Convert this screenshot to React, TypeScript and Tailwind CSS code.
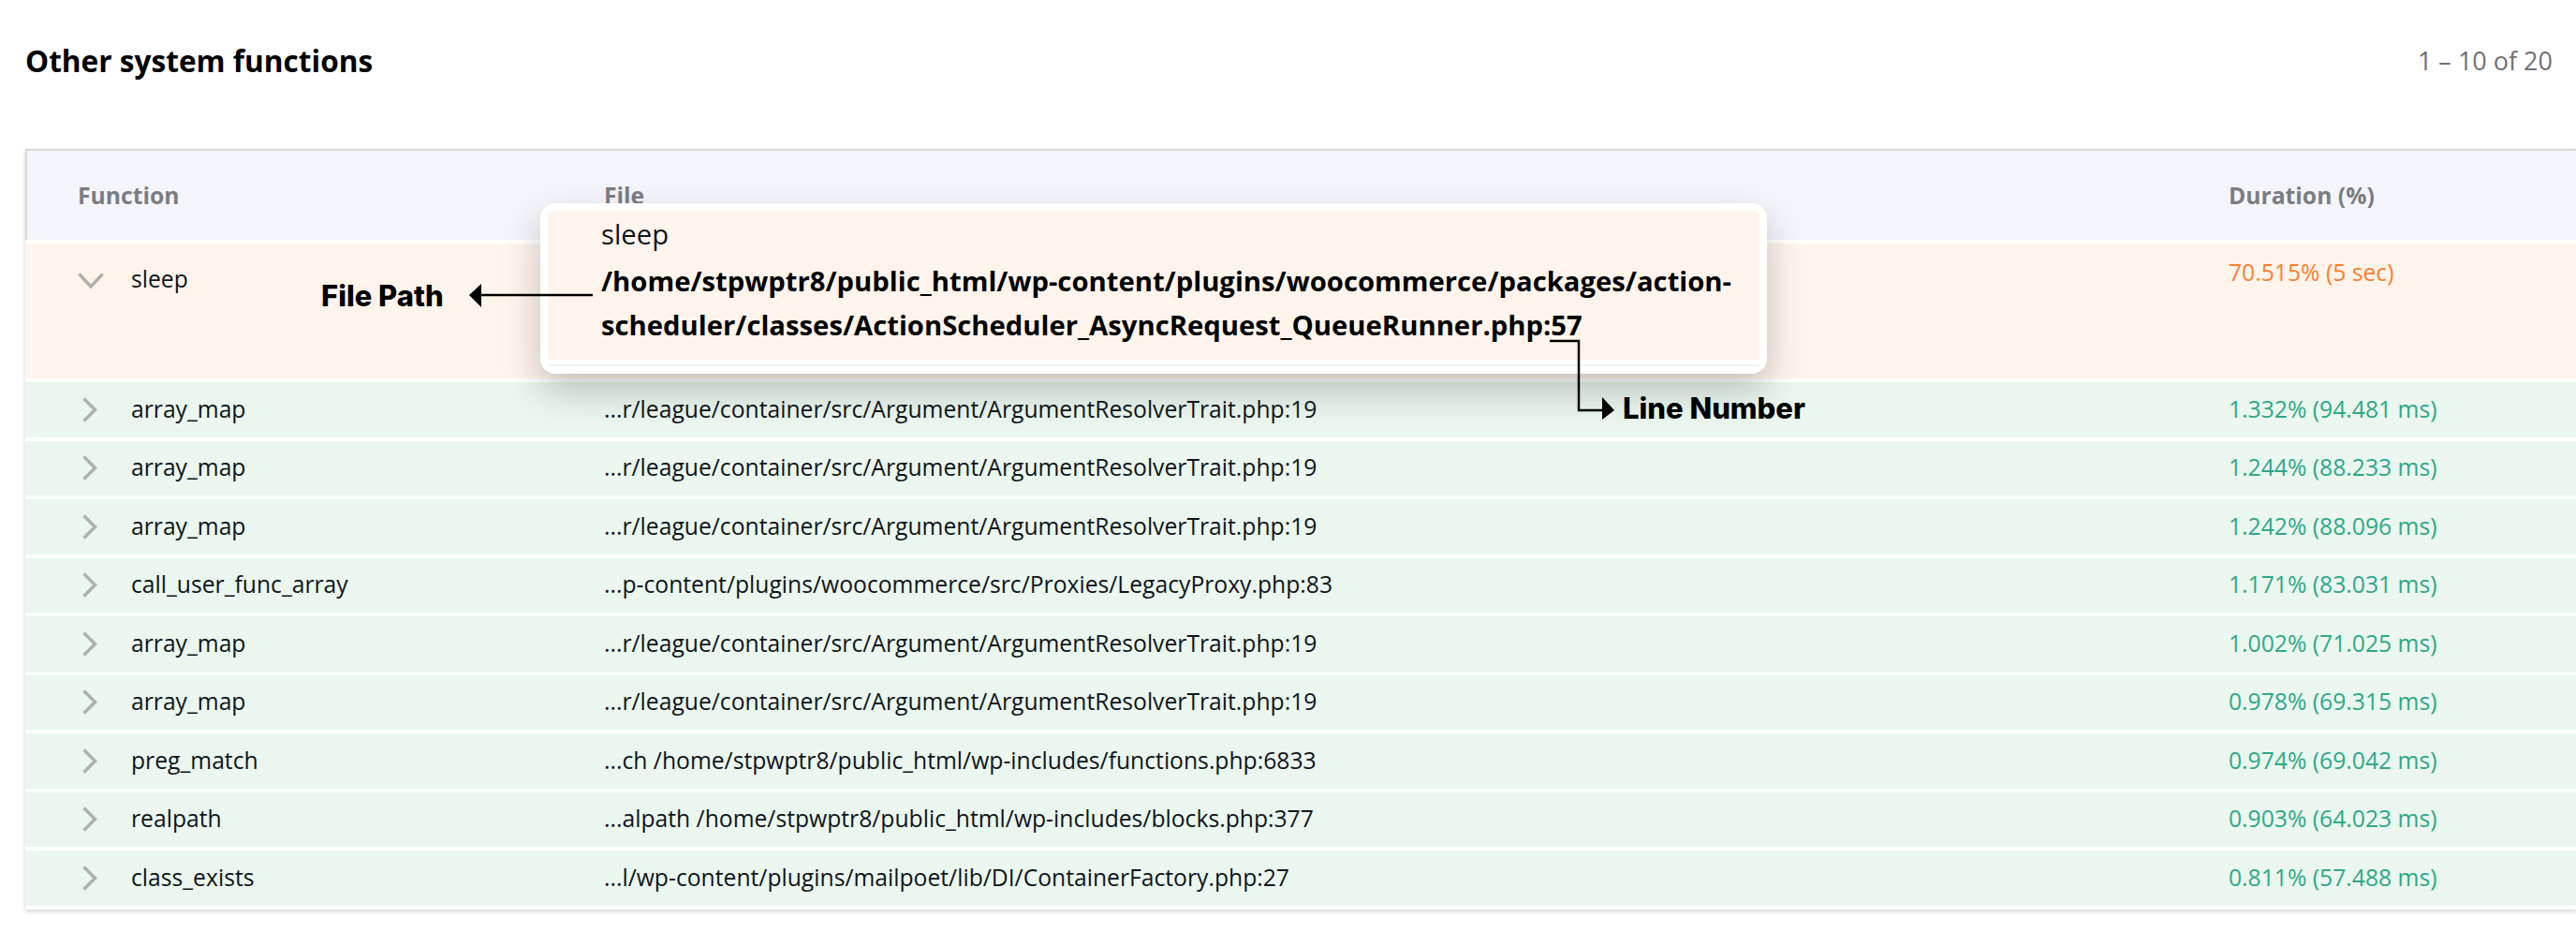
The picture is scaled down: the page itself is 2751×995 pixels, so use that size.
import React from "react";

const rows = [
  ["array_map", "...r/league/container/src/Argument/ArgumentResolverTrait.php:19", "1.332% (94.481 ms)"],
  ["array_map", "...r/league/container/src/Argument/ArgumentResolverTrait.php:19", "1.244% (88.233 ms)"],
  ["array_map", "...r/league/container/src/Argument/ArgumentResolverTrait.php:19", "1.242% (88.096 ms)"],
  ["call_user_func_array", "...p-content/plugins/woocommerce/src/Proxies/LegacyProxy.php:83", "1.171% (83.031 ms)"],
  ["array_map", "...r/league/container/src/Argument/ArgumentResolverTrait.php:19", "1.002% (71.025 ms)"],
  ["array_map", "...r/league/container/src/Argument/ArgumentResolverTrait.php:19", "0.978% (69.315 ms)"],
  ["preg_match", "...ch /home/stpwptr8/public_html/wp-includes/functions.php:6833", "0.974% (69.042 ms)"],
  ["realpath", "...alpath /home/stpwptr8/public_html/wp-includes/blocks.php:377", "0.903% (64.023 ms)"],
  ["class_exists", "...l/wp-content/plugins/mailpoet/lib/DI/ContainerFactory.php:27", "0.811% (57.488 ms)"],
];

function ChevronRight() {
  return (
    <svg width="17" height="27" viewBox="0 0 17 27" fill="none" className="shrink-0">
      <path d="M2.5 1.5 L14.5 13.5 L2.5 25.5" stroke="#b0b0b0" strokeWidth="3.5" />
    </svg>
  );
}

function ChevronDown() {
  return (
    <svg width="28" height="17" viewBox="0 0 28 17" fill="none" className="shrink-0">
      <path d="M1.5 1.5 L14 15 L26.5 1.5" stroke="#b0b0b0" strokeWidth="3.5" />
    </svg>
  );
}

export default function App() {
  return (
    <div className="relative h-[995px] w-[2751px] overflow-hidden bg-white pl-[27px] font-['Open_Sans',sans-serif] text-[24.7px] text-[#10141a]">
      <div className="flex h-[159px] items-start justify-between pr-[25px] pt-[44px]">
        <h2 className="text-[31.6px] leading-[42px] font-bold text-black">Other system functions</h2>
        <div className="text-[27px] leading-[42px] text-[#6f7275]">1 – 10 of 20</div>
      </div>

      <div className="shadow-[0_2px_5px_rgba(0,0,0,0.18)]">
        <div className="grid h-[97px] grid-cols-[616px_1735px_1fr] items-center border-t-2 border-l-2 border-[#d9d9d9] bg-[#f4f5fa] text-[24.7px] font-bold text-[#7a7d82]">
          <div className="pl-[54px]">Function</div>
          <div>File</div>
          <div>Duration (%)</div>
        </div>
        <div className="border-t-4 border-white">
          <div className="grid h-[144px] grid-cols-[618px_1735px_1fr] bg-[#fff4ec]">
            <div className="flex items-start pl-[56px] pt-[31px]">
              <ChevronDown />
              <span className="ml-[29px] -mt-[10px] leading-[34px]">sleep</span>
            </div>
            <div />
            <div className="pt-[14px] leading-[34px] text-[#fd7f2f]">70.515% (5 sec)</div>
          </div>
        </div>
        {rows.map(([fn, file, dur], i) => (
          <div key={i} className="border-t-4 border-white">
            <div className="grid h-[58.5px] grid-cols-[618px_1735px_1fr] items-center bg-[#eaf6ee]">
              <div className="flex items-center pl-[60px]">
                <ChevronRight />
                <span className="ml-[36px] pb-[2px]">{fn}</span>
              </div>
              <div className="pb-[2px]">{file}</div>
              <div className="pb-[2px] text-[#2ea888]">{dur}</div>
            </div>
          </div>
        ))}
        <div className="h-[4px] bg-white" />
      </div>

      <div className="absolute left-[577px] top-[217px] h-[182px] w-[1310px] rounded-[16px] bg-white p-[8px] shadow-[0_18px_40px_rgba(0,0,0,0.22)]">
        <div className="h-[159px] rounded-t-[6px] bg-[#fff4ec] pl-[57px] text-[29.25px] text-[#10141a]">
          <div className="pt-[4px] leading-[42px]">sleep</div>
          <div className="mt-[6px] w-[1235px] font-bold leading-[47px] text-black">
            /home/stpwptr8/public_html/wp-content/plugins/woocommerce/packages/action-scheduler/classes/ActionScheduler_AsyncRequest_QueueRunner.php:57
          </div>
        </div>
        <div className="mt-[5px] h-[2px] bg-[#eaf6ee]" />
      </div>

      <svg className="absolute left-[495px] top-[295px]" width="145" height="40" viewBox="0 0 145 40" fill="none">
        <path d="M14 20 H138" stroke="#000" strokeWidth="2.5" />
        <path d="M6 20 L19 8 V33 Z" fill="#000" />
      </svg>
      <div className="absolute left-[343px] top-[296px] font-['Inter',sans-serif] text-[31px] leading-[40px] font-extrabold text-black">File Path</div>

      <svg className="absolute left-[1650px] top-[360px]" width="80" height="95" viewBox="0 0 80 95" fill="none">
        <path d="M5 4 H36 V78 H62" stroke="#000" strokeWidth="2.5" />
        <path d="M74 78 L61 64 V88 Z" fill="#000" />
      </svg>
      <div className="absolute left-[1733px] top-[416px] font-['Inter',sans-serif] text-[31px] leading-[40px] font-extrabold text-black">Line Number</div>
    </div>
  );
}
